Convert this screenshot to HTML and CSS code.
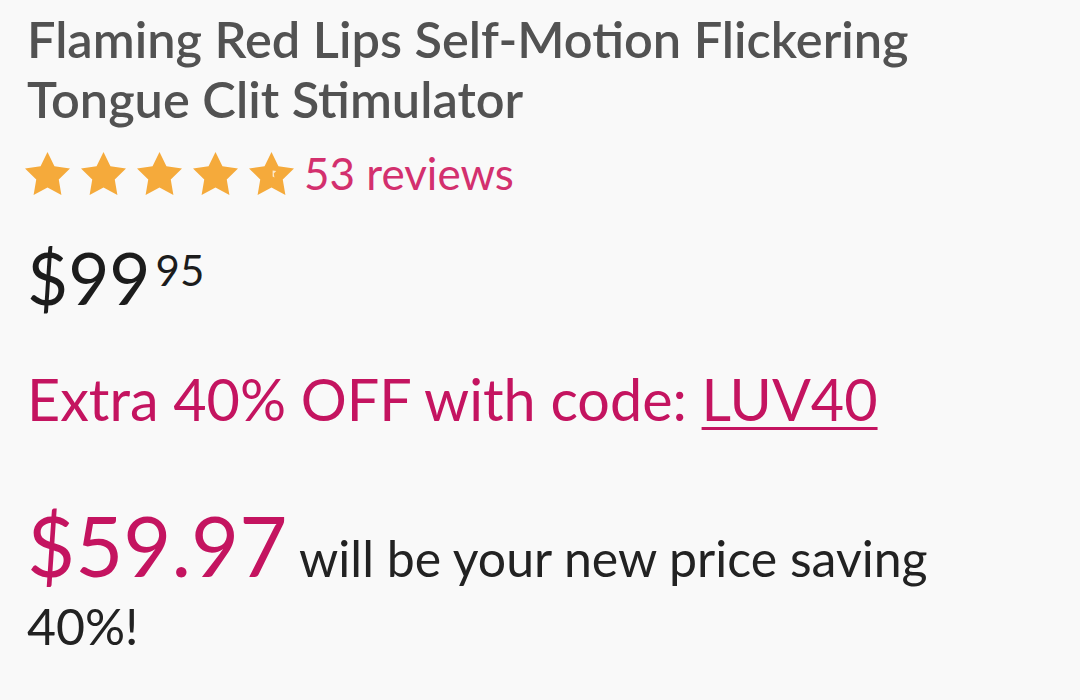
FILE: index.html
```html
<!DOCTYPE html>
<html>
<head>
<meta charset="utf-8">
<link rel="stylesheet" href="styles.css">
</head>
<body>
<div class="product">
  <h1 class="title">Flaming Red Lips Self-Motion Flickering Tongue Clit Stimulator</h1>
  <div class="rating">
    <div class="stars">
      <svg class="star" viewBox="2 2 20 19.02"><path d="M12 2l3.09 6.26L22 9.27l-5 4.87 1.18 6.88L12 17.77l-6.18 3.25L7 14.14 2 9.27l6.91-1.01L12 2z"/></svg>
      <svg class="star" viewBox="2 2 20 19.02"><path d="M12 2l3.09 6.26L22 9.27l-5 4.87 1.18 6.88L12 17.77l-6.18 3.25L7 14.14 2 9.27l6.91-1.01L12 2z"/></svg>
      <svg class="star" viewBox="2 2 20 19.02"><path d="M12 2l3.09 6.26L22 9.27l-5 4.87 1.18 6.88L12 17.77l-6.18 3.25L7 14.14 2 9.27l6.91-1.01L12 2z"/></svg>
      <svg class="star" viewBox="2 2 20 19.02"><path d="M12 2l3.09 6.26L22 9.27l-5 4.87 1.18 6.88L12 17.77l-6.18 3.25L7 14.14 2 9.27l6.91-1.01L12 2z"/></svg>
      <svg class="star" viewBox="2 2 20 19.02"><path d="M12 2l3.09 6.26L22 9.27l-5 4.87 1.18 6.88L12 17.77l-6.18 3.25L7 14.14 2 9.27l6.91-1.01L12 2z"/><path class="notch" d="M12.5 10.2l1.6 0.25-1.1 1.1 0.3 1.7-0.8-0.45z"/></svg>
    </div>
    <a class="reviews" href="#">53 reviews</a>
  </div>
  <div class="price">$99<span class="cents">95</span></div>
  <p class="promo">Extra 40% OFF with code: <a class="code" href="#">LUV40</a></p>
  <p class="newprice"><span class="amount">$59.97</span> <span class="note">will be your new price saving 40%!</span></p>
</div>
</body>
</html>
```

FILE: styles.css
```css
html, body {
  margin: 0;
  padding: 0;
  background: #f9f9f9;
}
body {
  font-family: Lato, "Noto Sans", sans-serif;
  width: 1080px;
  height: 700px;
  overflow: hidden;
}
.product {
  padding: 9px 0 0 27px;
}
.title {
  margin: 0;
  font-size: 50.5px;
  line-height: 60px;
  font-weight: 600;
  color: #525252;
  width: 1000px;
}
.rating {
  display: flex;
  align-items: center;
  margin-top: 20px;
  height: 48px;
}
.stars {
  display: flex;
  gap: 11px;
  margin-left: -2px;
}
.star {
  width: 45px;
  height: 43px;
  fill: #f5aa3b;
  display: block;
}
.star .notch {
  fill: #fce9cc;
}
.reviews {
  margin-left: 10px;
  font-size: 44px;
  line-height: 48px;
  color: #d3306e;
  text-decoration: none;
}
.price {
  margin-top: 38px;
  font-size: 71px;
  line-height: 70px;
  color: #1c1c1c;
}
.cents {
  font-size: 42px;
  vertical-align: 19px;
  margin-left: 5px;
}
.promo {
  margin: 54px 0 0 0;
  font-size: 57.5px;
  line-height: 64px;
  color: #c41460;
}
.code {
  color: #c41460;
  text-decoration: underline;
  text-decoration-thickness: 3px;
  text-underline-offset: 6px;
}
.newprice {
  margin: 73px 0 0 0;
  font-size: 50px;
  line-height: 68px;
  color: #222;
  width: 960px;
}
.amount {
  font-size: 83px;
  line-height: 83px;
  color: #c41460;
}
.note {
  color: #222;
}
```
